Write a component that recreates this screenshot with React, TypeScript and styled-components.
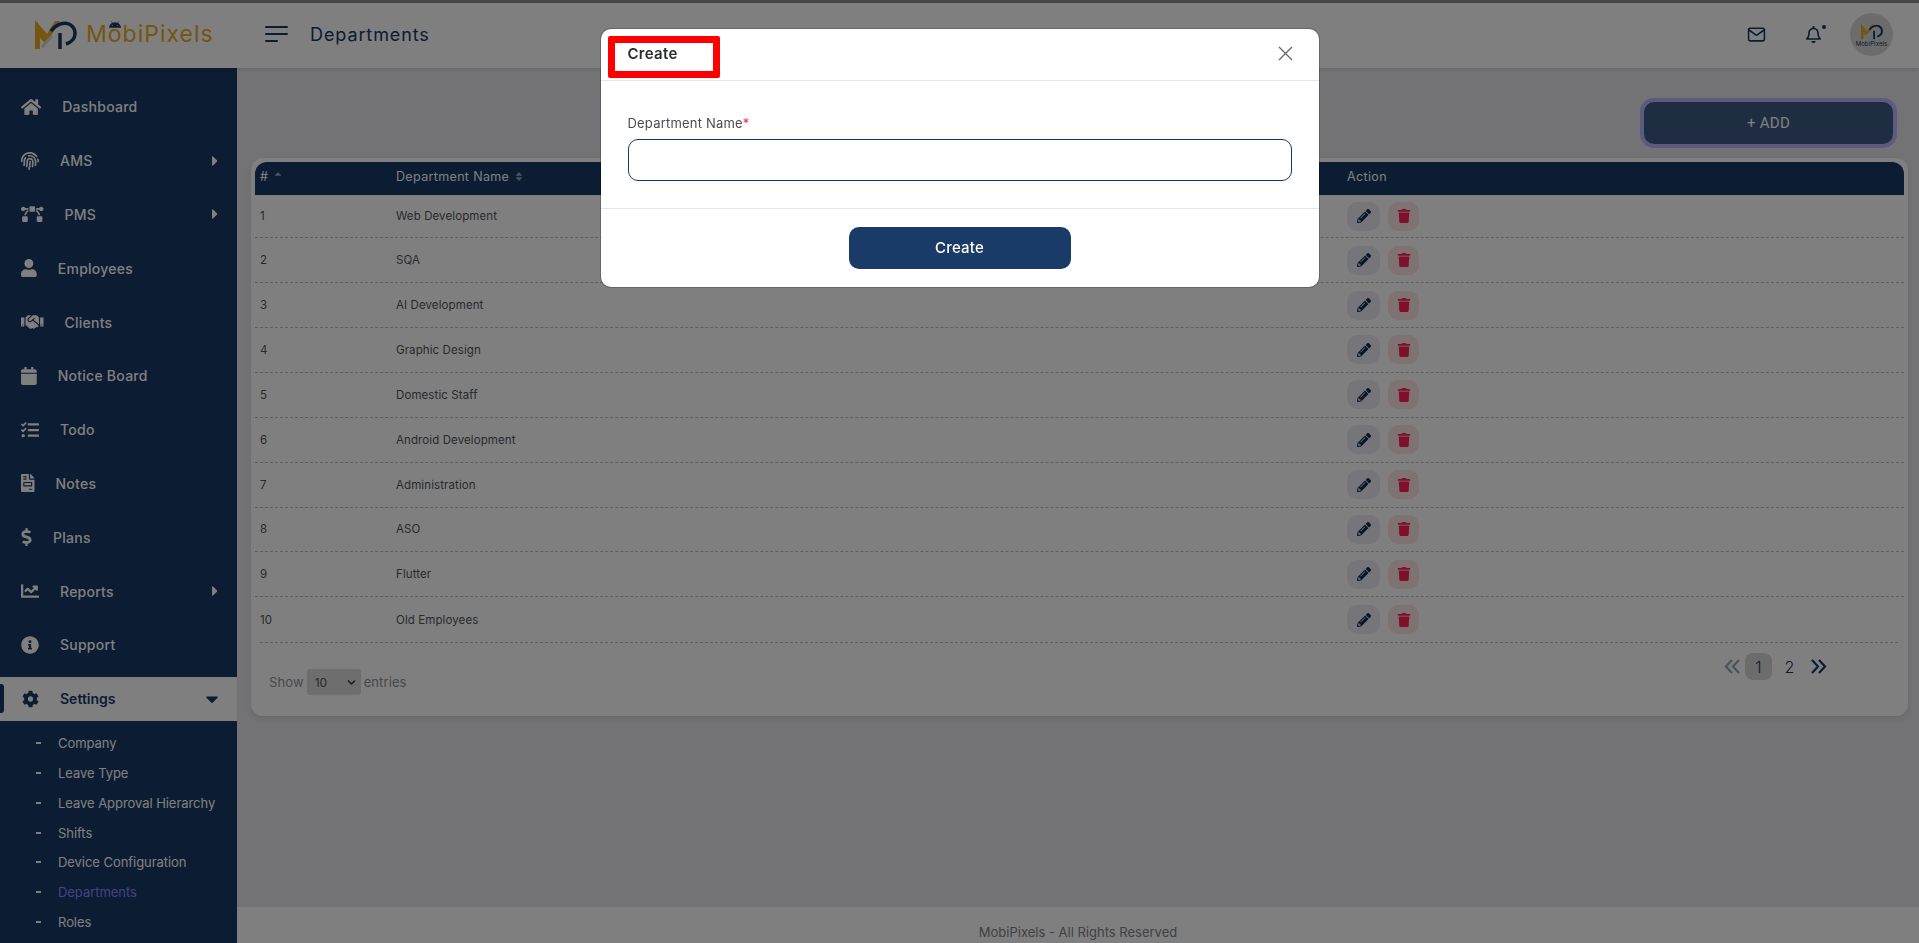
import React from "react";
import styled, { createGlobalStyle } from "styled-components";
import {
  FaHome, FaFingerprint, FaBezierCurve, FaUser, FaHandshake, FaCalendar, FaTasks,
  FaFileInvoice, FaDollarSign, FaChartLine, FaInfoCircle, FaCog, FaCaretRight, FaCaretDown,
  FaPencilAlt, FaTrash, FaSortUp, FaSort, FaAndroid, FaChevronDown, FaRegBell,
} from "react-icons/fa";
import { FiMail } from "react-icons/fi";

const NAVY = "#163866";
const FONT = `Inter, "Open Sans", "Liberation Sans", sans-serif`;

const Global = createGlobalStyle`
  html, body { margin: 0; padding: 0; height: 100%; overflow: hidden; }
  body { font-family: ${FONT}; background: #e6e6ea; }
  * { box-sizing: border-box; }
`;

const Page = styled.div`
  height: 943px;
  display: flex;
  flex-direction: column;
  border-top: 3px solid #8c8c8c;
  overflow: hidden;
`;

const Header = styled.header`
  flex: 0 0 65px;
  display: flex;
  align-items: center;
  background: #fff;
  box-shadow: 0 1px 4px rgba(0, 0, 0, 0.12);
  position: relative;
  z-index: 2;
  padding: 0 26px 3px 35px;
`;
const LogoBox = styled.div`
  display: flex;
  align-items: center;
  width: 230px;
`;
const LogoWord = styled.span`
  margin-left: 9px;
  font-size: 23px;
  font-weight: 400;
  letter-spacing: 1px;
  color: #e8ac22;
`;
const LogoO = styled.span`
  position: relative;
  svg {
    position: absolute;
    left: 1px;
    top: -1px;
    width: 12px;
    height: 12px;
    color: ${NAVY};
  }
`;
const Burger = styled.div`
  display: flex;
  flex-direction: column;
  gap: 5px;
  width: 23px;
  margin-right: 22px;
`;
const BurgerLine = styled.i<{ $w: number }>`
  display: block;
  height: 2px;
  border-radius: 1px;
  width: ${(p) => p.$w}px;
  background: ${NAVY};
`;
const PageTitle = styled.h1`
  margin: 0;
  font-size: 18px;
  font-weight: 400;
  letter-spacing: 0.9px;
  color: ${NAVY};
  flex: 1;
`;
const HeaderIcon = styled.div<{ $mr: number }>`
  position: relative;
  display: flex;
  color: ${NAVY};
  margin-right: ${(p) => p.$mr}px;
`;
const BellDot = styled.i`
  position: absolute;
  right: -4px;
  top: -1px;
  width: 4px;
  height: 4px;
  border-radius: 50%;
  background: ${NAVY};
`;
const Avatar = styled.div`
  width: 43px;
  height: 43px;
  border-radius: 50%;
  background: #d9d9d9;
  display: flex;
  flex-direction: column;
  align-items: center;
  justify-content: center;
  padding-top: 3px;
`;
const AvatarText = styled.span`
  font-size: 6px;
  line-height: 7px;
  color: ${NAVY};
  letter-spacing: 0.1px;
`;

const Body = styled.div`
  flex: 1;
  display: flex;
  min-height: 0;
`;

const Sidebar = styled.nav`
  flex: 0 0 237px;
  background: ${NAVY};
  padding-top: 12px;
  overflow: hidden;
`;
const NavItem = styled.div`
  height: 53.8px;
  display: flex;
  align-items: center;
  padding-left: 21px;
  color: #fff;
  font-size: 14px;
  font-weight: 500;
  letter-spacing: 0.25px;
`;
const NavIcon = styled.span<{ $w: number }>`
  display: flex;
  align-items: center;
  width: ${(p) => p.$w}px;
  margin-right: 21px;
  svg {
    width: ${(p) => p.$w}px;
    height: 18px;
  }
`;
const NavLabel = styled.span`
  flex: 1;
`;
const NavCaret = styled.span`
  display: flex;
  margin-right: 14px;
  font-size: 16px;
`;
const ActiveCaret = styled.span`
  display: flex;
  margin-right: 15px;
  font-size: 20px;
`;
const ActiveItem = styled.div`
  position: relative;
  height: 44px;
  margin-top: 5px;
  display: flex;
  align-items: center;
  padding-left: 22px;
  background: #fff;
  color: ${NAVY};
  font-size: 14px;
  font-weight: 600;
  letter-spacing: 0;
  &::before {
    content: "";
    position: absolute;
    left: 0;
    top: 7px;
    width: 4px;
    height: 29px;
    border-radius: 0 3px 3px 0;
    background: ${NAVY};
  }
`;
const SubList = styled.div`
  margin-top: 7px;
`;
const SubItem = styled.div<{ $active?: boolean }>`
  height: 29.95px;
  display: flex;
  align-items: center;
  padding-left: 36px;
  font-size: 13px;
  letter-spacing: -0.05px;
  color: ${(p) => (p.$active ? "#8f84ff" : "#fff")};
`;
const SubDash = styled.i`
  width: 5px;
  height: 2px;
  background: #fff;
  margin-right: 17px;
`;

const Main = styled.main`
  flex: 1;
  display: flex;
  flex-direction: column;
  min-width: 0;
`;
const Content = styled.div`
  flex: 1;
  padding: 34px 11px 0 14px;
`;
const Toolbar = styled.div`
  display: flex;
  justify-content: flex-end;
  padding-right: 15px;
  margin-bottom: 14px;
`;
const AddButton = styled.button`
  width: 249px;
  height: 42px;
  border: 0;
  border-radius: 10px;
  background: #3f5b86;
  color: #fff;
  font-family: Roboto, sans-serif;
  font-size: 15px;
  letter-spacing: 0.3px;
  box-shadow: 0 0 0 4px #bdb4ff;
`;
const Card = styled.section`
  height: 558px;
  background: #fff;
  border-radius: 12px;
  padding: 4px;
  box-shadow: 0 3px 6px rgba(0, 0, 0, 0.08);
  display: flex;
  flex-direction: column;
`;
const TableHead = styled.div`
  display: grid;
  grid-template-columns: 136px 951px 1fr;
  height: 33px;
  background: ${NAVY};
  border-radius: 12px 12px 0 0;
  color: #fff;
  font-size: 12.5px;
  align-items: center;
  padding-bottom: 5px;
  letter-spacing: 0.35px;
`;
const HeadCell = styled.div`
  display: flex;
  align-items: center;
  padding-left: 5px;
  svg {
    margin-left: 5px;
    width: 10px;
    height: 11px;
    opacity: 0.55;
  }
`;
const Row = styled.div<{ $first?: boolean; $last?: boolean }>`
  display: grid;
  grid-template-columns: 136px 951px 1fr;
  align-items: center;
  height: ${(p) => (p.$first ? "43.2px" : "44.9px")};
  border-bottom: ${(p) => (p.$last ? "0" : "1px dashed #c0c0c0")};
  font-size: 11.5px;
  letter-spacing: 0.1px;
  color: #52545c;
`;
const Cell = styled.div`
  padding-left: 5px;
`;
const Actions = styled.div`
  display: flex;
  gap: 8px;
  padding-left: 5px;
`;
const IconButton = styled.button<{ $danger?: boolean }>`
  width: ${(p) => (p.$danger ? 31 : 33)}px;
  height: 29px;
  border: 0;
  padding: 0;
  border-radius: 10px;
  display: flex;
  align-items: center;
  justify-content: center;
  font-size: 14px;
  background: ${(p) => (p.$danger ? "#fde4e6" : "#eaebf5")};
  color: ${(p) => (p.$danger ? "#ff2158" : "#0f2c55")};
`;
const TableEnd = styled.div`
  margin: 0 6px 0 5px;
  border-top: 1px dashed #c0c0c0;
`;
const TableFoot = styled.div`
  flex: 1;
  display: flex;
  justify-content: space-between;
  align-items: flex-start;
  padding: 10px 77px 0 14px;
`;
const Entries = styled.div`
  display: flex;
  align-items: center;
  gap: 3px;
  margin-top: 16px;
  font-size: 13px;
  letter-spacing: 0.1px;
  color: #8e9096;
`;
const FakeSelect = styled.div`
  width: 54px;
  height: 26px;
  border-radius: 3px;
  background: #dcdcdc;
  color: #55585f;
  font-size: 12px;
  display: flex;
  align-items: center;
  justify-content: space-between;
  padding: 0 5px 0 8px;
  svg {
    width: 9px;
    height: 9px;
    color: #333;
  }
`;
const Pager = styled.div`
  display: flex;
  align-items: center;
  font-size: 16px;
  font-weight: 300;
  color: ${NAVY};
`;
const PagerArrow = styled.span<{ $dim?: boolean; $m: string }>`
  display: flex;
  margin: ${(p) => p.$m};
  opacity: ${(p) => (p.$dim ? 0.45 : 1)};
`;
const PageNum = styled.span<{ $current?: boolean }>`
  width: 27px;
  height: 27px;
  border-radius: 8px;
  display: flex;
  align-items: center;
  justify-content: center;
  margin-left: ${(p) => (p.$current ? 0 : 4)}px;
  background: ${(p) => (p.$current ? "#d9d9d9" : "transparent")};
`;
const Footer = styled.footer`
  flex: 0 0 36px;
  background: #fff;
  display: flex;
  align-items: center;
  justify-content: center;
  font-size: 13px;
  letter-spacing: 0;
  color: #7f8288;
  padding-top: 13px;
`;

const Backdrop = styled.div`
  position: fixed;
  inset: 0;
  z-index: 10;
  background: rgba(0, 0, 0, 0.5);
  display: flex;
  justify-content: center;
  align-items: flex-start;
  padding-top: 29px;
`;
const Modal = styled.div`
  position: relative;
  width: 718px;
  background: #fff;
  border-radius: 10px;
  box-shadow: 0 0 0 1px rgba(0, 0, 0, 0.2);
`;
const ModalHead = styled.div`
  height: 52px;
  display: flex;
  align-items: center;
  justify-content: space-between;
  padding: 0 27px 3px 27px;
  border-bottom: 1px solid #e4e6e8;
`;
const ModalTitle = styled.h2`
  margin: 0;
  font-size: 15px;
  font-weight: 600;
  letter-spacing: 0.3px;
  color: #2b2d33;
`;
const CloseBtn = styled.button`
  border: 0;
  background: none;
  padding: 0;
  display: flex;
  color: #6a6a6a;
  margin-right: -1px;
`;
const Highlight = styled.div`
  position: absolute;
  left: 7px;
  top: 7px;
  width: 112px;
  height: 42px;
  border: 7px solid #ff0000;
  border-radius: 2px;
  pointer-events: none;
`;
const ModalBody = styled.div`
  padding: 32px 27px 27px;
  border-bottom: 1px solid #e4e6e8;
`;
const Label = styled.label`
  display: block;
  font-size: 13px;
  line-height: 20px;
  margin-bottom: 6px;
  letter-spacing: 0.2px;
  color: #4a4c52;
`;
const Req = styled.span`
  color: #f03050;
`;
const TextInput = styled.input`
  display: block;
  width: 664px;
  height: 42px;
  border: 1px solid ${NAVY};
  border-radius: 10px;
  outline: none;
  background: #fff;
`;
const ModalFoot = styled.div`
  display: flex;
  justify-content: center;
  padding: 18px 0;
`;
const PrimaryButton = styled.button`
  width: 222px;
  height: 42px;
  border: 0;
  border-radius: 10px;
  background: #1a3a68;
  color: #fff;
  font-family: ${FONT};
  font-size: 15px;
  font-weight: 500;
  letter-spacing: 0.2px;
  padding-bottom: 2px;
`;

const LogoMark = ({ size = 42 }: { size?: number }) => (
  <svg width={size} height={(size * 29) / 42} viewBox="0 0 42 29" fill="none">
    <path d="M0 0 L12 14 L20 1 L25 1 L11 24 L5 18 L5 29 L0 29 Z" fill="#e8ac22" />
    <path d="M7 27 L17 16" stroke="#d8d8d8" strokeWidth="3" />
    <path d="M25 29 L25 13" stroke={NAVY} strokeWidth="3.5" />
    <path d="M16 11 C21 4 29 2 34 4 C42 8 43 20 31 24" stroke={NAVY} strokeWidth="3.5" />
  </svg>
);

const Chevrons = ({ left }: { left?: boolean }) => (
  <svg width="16" height="15" viewBox="0 0 16 15" fill="none" stroke="currentColor" strokeWidth="2.2">
    <g transform={left ? "translate(16 0) scale(-1 1)" : undefined}>
      <path d="M1 1 L7 7.5 L1 14" />
      <path d="M8 1 L14 7.5 L8 14" />
    </g>
  </svg>
);

const navItems = [
  { label: "Dashboard", Icon: FaHome, w: 20.25 },
  { label: "AMS", Icon: FaFingerprint, w: 18, caret: true },
  { label: "PMS", Icon: FaBezierCurve, w: 22.5, caret: true },
  { label: "Employees", Icon: FaUser, w: 15.75 },
  { label: "Clients", Icon: FaHandshake, w: 22.5 },
  { label: "Notice Board", Icon: FaCalendar, w: 15.75 },
  { label: "Todo", Icon: FaTasks, w: 18 },
  { label: "Notes", Icon: FaFileInvoice, w: 13.5 },
  { label: "Plans", Icon: FaDollarSign, w: 11 },
  { label: "Reports", Icon: FaChartLine, w: 18, caret: true },
  { label: "Support", Icon: FaInfoCircle, w: 18 },
];
const subItems = ["Company", "Leave Type", "Leave Approval Hierarchy", "Shifts", "Device Configuration", "Departments", "Roles"];
const departments = ["Web Development", "SQA", "AI Development", "Graphic Design", "Domestic Staff", "Android Development", "Administration", "ASO", "Flutter", "Old Employees"];

export default function App() {
  return (
    <>
      <Global />
      <Page>
        <Header>
          <LogoBox>
            <LogoMark />
            <LogoWord>
              M<LogoO>o<FaAndroid /></LogoO>biPixels
            </LogoWord>
          </LogoBox>
          <Burger>
            <BurgerLine $w={23} />
            <BurgerLine $w={23} />
            <BurgerLine $w={13} />
          </Burger>
          <PageTitle>Departments</PageTitle>
          <HeaderIcon $mr={39}>
            <FiMail size={19} />
          </HeaderIcon>
          <HeaderIcon $mr={28}>
            <FaRegBell size={17} />
            <BellDot />
          </HeaderIcon>
          <Avatar>
            <LogoMark size={22} />
            <AvatarText>MobiPixels</AvatarText>
          </Avatar>
        </Header>
        <Body>
          <Sidebar>
            {navItems.map(({ label, Icon, w, caret }) => (
              <NavItem key={label}>
                <NavIcon $w={w}>
                  <Icon />
                </NavIcon>
                <NavLabel>{label}</NavLabel>
                {caret && (
                  <NavCaret>
                    <FaCaretRight />
                  </NavCaret>
                )}
              </NavItem>
            ))}
            <ActiveItem>
              <NavIcon $w={17}>
                <FaCog />
              </NavIcon>
              <NavLabel>Settings</NavLabel>
              <ActiveCaret>
                <FaCaretDown />
              </ActiveCaret>
            </ActiveItem>
            <SubList>
              {subItems.map((s) => (
                <SubItem key={s} $active={s === "Departments"}>
                  <SubDash />
                  {s}
                </SubItem>
              ))}
            </SubList>
          </Sidebar>
          <Main>
            <Content>
              <Toolbar>
                <AddButton>+ ADD</AddButton>
              </Toolbar>
              <Card>
                <TableHead>
                  <HeadCell>
                    # <FaSortUp />
                  </HeadCell>
                  <HeadCell>
                    Department Name <FaSort />
                  </HeadCell>
                  <HeadCell>Action</HeadCell>
                </TableHead>
                {departments.map((d, i) => (
                  <Row key={d} $first={i === 0} $last={i === departments.length - 1}>
                    <Cell>{i + 1}</Cell>
                    <Cell>{d}</Cell>
                    <Actions>
                      <IconButton>
                        <FaPencilAlt />
                      </IconButton>
                      <IconButton $danger>
                        <FaTrash />
                      </IconButton>
                    </Actions>
                  </Row>
                ))}
                <TableEnd />
                <TableFoot>
                  <Entries>
                    Show
                    <FakeSelect>
                      10 <FaChevronDown />
                    </FakeSelect>
                    entries
                  </Entries>
                  <Pager>
                    <PagerArrow $dim $m="0 5px 0 -1px">
                      <Chevrons left />
                    </PagerArrow>
                    <PageNum $current>1</PageNum>
                    <PageNum>2</PageNum>
                    <PagerArrow $m="0 0 0 8px">
                      <Chevrons />
                    </PagerArrow>
                  </Pager>
                </TableFoot>
              </Card>
            </Content>
            <Footer>MobiPixels - All Rights Reserved</Footer>
          </Main>
        </Body>
      </Page>
      <Backdrop>
        <Modal>
          <ModalHead>
            <ModalTitle>Create</ModalTitle>
            <CloseBtn aria-label="Close">
              <svg width="15" height="15" viewBox="0 0 15 15" stroke="currentColor" strokeWidth="1.4">
                <path d="M1 1 L14 14 M14 1 L1 14" />
              </svg>
            </CloseBtn>
          </ModalHead>
          <Highlight />
          <ModalBody>
            <Label>
              Department Name<Req>*</Req>
            </Label>
            <TextInput />
          </ModalBody>
          <ModalFoot>
            <PrimaryButton>Create</PrimaryButton>
          </ModalFoot>
        </Modal>
      </Backdrop>
    </>
  );
}
